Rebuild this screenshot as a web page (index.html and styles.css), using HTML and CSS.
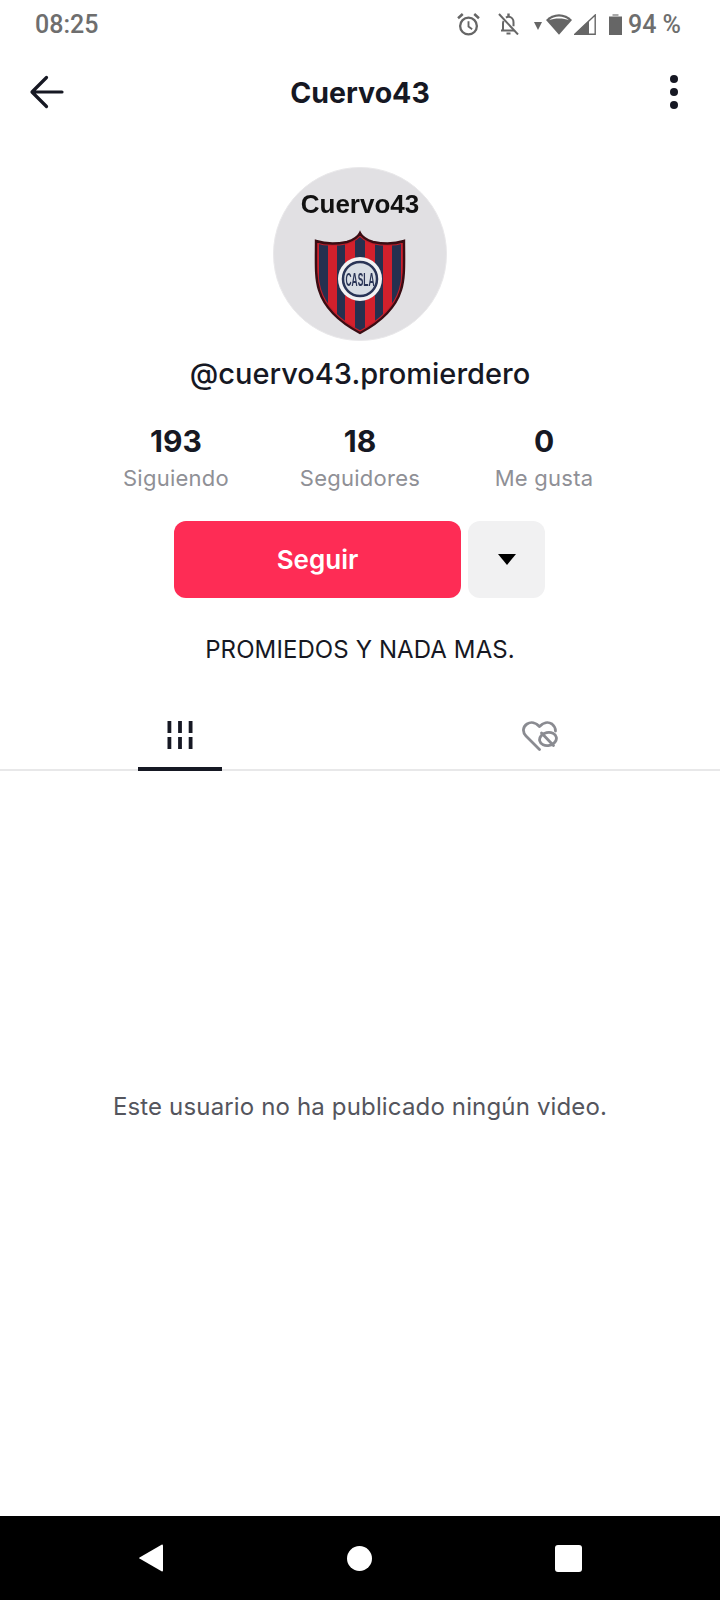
FILE: index.html
```html
<!DOCTYPE html>
<html lang="es">
<head>
  <meta charset="UTF-8">
  <title>Cuervo43</title>
  <link rel="stylesheet" href="styles.css">
</head>
<body>
  <div class="screen">

    <div class="status-bar">
      <span class="time">08:25</span>
      <div class="status-icons">
        <svg class="ic-alarm" width="23" height="23" viewBox="0 0 22 22" fill="none" stroke="#666" stroke-width="2.2">
          <circle cx="11" cy="12.500" r="8"/>
          <path d="M11 8v5l3.500 2.500" stroke-width="1.800"/>
          <path d="M1 5 5.500 1M21 5 16.500 1" stroke-width="2.400"/>
        </svg>
        <svg class="ic-bell" width="21" height="22" viewBox="0 0 21 22" fill="none" stroke="#666" stroke-width="2">
          <path d="M3 17.500h13M5 17v-6.500c0-1 .2-1.800.6-2.500M8 4.600c.7-.5 1.500-.8 2.500-.8 3 0 5 2.400 5 5.500v4"/>
          <path d="M10.500 .5v3" stroke-width="2.400"/>
          <path d="M8.500 20.500h4"/>
          <path d="M1 1 20 21.500"/>
        </svg>
        <svg class="ic-arrow" width="8" height="8" viewBox="0 0 8 8"><path d="M0 0h8L4 8z" fill="#666"/></svg>
        <svg class="ic-wifi" width="26" height="21" viewBox="0 0 26 21">
          <path d="M0 6C3.400 2.400 8 .3 13 .3S22.600 2.400 26 6L13 20.700z" fill="#666"/>
          <path d="M3.100 6.200C5.800 3.800 9.200 2.500 13 2.500s7.200 1.300 9.900 3.700C20.200 5.200 16.800 4.600 13 4.600s-7.200.6-9.900 1.600z" fill="#fff"/>
        </svg>
        <svg class="ic-signal" width="22" height="21" viewBox="0 0 22 21">
          <path d="M.8 20.300 21.200 1v19.300z" fill="#fff" stroke="#666" stroke-width="1.400"/>
          <path d="M0 21 15 6.800V21z" fill="#666"/>
        </svg>
        <svg class="ic-battery" width="13" height="21" viewBox="0 0 13 21">
          <path d="M3.500 0h6v2h-6z" fill="#aaa"/>
          <path d="M0 2.500h13V21H0z" fill="#666"/>
        </svg>
        <span class="battery-pct">94 %</span>
      </div>
    </div>

    <div class="top-nav">
      <svg width="36" height="36" viewBox="0 0 36 36" fill="none" stroke="#161823" stroke-width="3.200" stroke-linecap="round" stroke-linejoin="round">
        <path d="M33 18H3.500M17.500 3.500 3 18l14.500 14.500"/>
      </svg>
      <h1 class="nav-title">Cuervo43</h1>
      <div class="more-dots"><i></i><i></i><i></i></div>
    </div>

    <div class="profile">
      <div class="avatar">
        <span class="avatar-name">Cuervo43</span>
        <svg class="crest" width="90" height="102" viewBox="0 0 90 102">
          <defs>
            <path id="shield" d="M45 1C47 5 52 8 58 10 68 12 80 12 89 9 89 30 90 45 86 58 80 78 62 92 45 101 28 92 10 78 4 58 0 45 1 30 1 9 10 12 22 12 32 10 38 8 43 5 45 1z"/>
            <clipPath id="shield-clip"><use href="#shield"/></clipPath>
          </defs>
          <g clip-path="url(#shield-clip)">
            <rect width="90" height="102" fill="#d3202c"/>
            <rect x="4" width="9" height="102" fill="#26304f"/>
            <rect x="22" width="8" height="102" fill="#26304f"/>
            <rect x="40" width="10" height="102" fill="#26304f"/>
            <rect x="60" width="8" height="102" fill="#26304f"/>
            <rect x="77" width="9" height="102" fill="#26304f"/>
            <use href="#shield" fill="none" stroke="#c01f2b" stroke-width="4.500"/>
          </g>
          <use href="#shield" fill="none" stroke="#3a0d14" stroke-width="2.400"/>
          <circle cx="45" cy="47" r="22" fill="#f2f2f4"/>
          <circle cx="45" cy="47" r="17" fill="#d9dee5" stroke="#2a3557" stroke-width="2.500"/>
          <text class="crest-text" x="45" y="53.500" text-anchor="middle" textLength="29" lengthAdjust="spacingAndGlyphs">CASLA</text>
        </svg>
      </div>
      <div class="username">@cuervo43.promierdero</div>

      <div class="stats">
        <div class="stat"><strong>193</strong><span>Siguiendo</span></div>
        <div class="stat"><strong>18</strong><span>Seguidores</span></div>
        <div class="stat"><strong>0</strong><span>Me gusta</span></div>
      </div>

      <div class="actions">
        <button class="btn-follow" type="button">Seguir</button>
        <button class="btn-more" type="button"><i class="caret"></i></button>
      </div>

      <p class="bio">PROMIEDOS Y NADA MAS.</p>
    </div>

    <div class="tabs">
      <div class="tab active">
        <svg width="26" height="28" viewBox="0 0 26 28" fill="#161823">
          <rect x="0.500" y="0" width="3.800" height="12"/><rect x="11.100" y="0" width="3.800" height="12"/><rect x="21.700" y="0" width="3.800" height="12"/>
          <rect x="0.500" y="16" width="3.800" height="12"/><rect x="11.100" y="16" width="3.800" height="12"/><rect x="21.700" y="16" width="3.800" height="12"/>
        </svg>
      </div>
      <div class="tab">
        <svg width="36" height="30" viewBox="0 0 36 30" fill="none" stroke="#8a8b91" stroke-width="2.800" stroke-linecap="round" stroke-linejoin="round">
          <path d="M17.500 28.500 4 15C0 11 1 5.500 5 3c4-2.500 9-1.500 12.500 2.500C21 1.500 26 .5 30 3c2.500 2 3.500 4 3.500 7"/>
          <ellipse cx="26" cy="18" rx="8.500" ry="6.500" transform="rotate(-12 26 18)"/>
          <path d="M19.500 12 31.500 24.500"/>
        </svg>
      </div>
    </div>

    <div class="empty">
      <p>Este usuario no ha publicado ningún video.</p>
    </div>

    <div class="system-nav">
      <svg width="26" height="30" viewBox="0 0 26 30"><path d="M24 1.500 1.500 14.500a.6.6 0 0 0 0 1L24 28.500a1 1 0 0 0 1-1v-25a1 1 0 0 0-1-1z" fill="#fff"/></svg>
      <i class="nav-circle"></i>
      <i class="nav-square"></i>
    </div>

  </div>
</body>
</html>
```

FILE: styles.css
```css
* {
  box-sizing: border-box;
}

body {
  margin: 0;
  background-color: #fff;
  font-family: Inter, "Noto Sans", sans-serif;
  color: #161823;
}

.screen {
  width: 720px;
  height: 1600px;
  display: flex;
  flex-direction: column;
}

.status-bar {
  height: 48px;
  padding: 0 39px 0 35px;
  display: flex;
  justify-content: space-between;
  align-items: center;
  color: #6e6e6e;
}

.time {
  font-family: Roboto, sans-serif;
  font-size: 25px;
  font-weight: 500;
}

.status-icons {
  display: flex;
  align-items: center;
}

.ic-alarm { margin-right: 18px; }
.ic-bell { margin-right: 15px; }
.ic-arrow { margin-right: 4px; margin-top: 3px; }
.ic-wifi { margin-right: 2px; }
.ic-signal { margin-right: 13px; }
.ic-battery { margin-right: 6px; }

.battery-pct {
  font-family: Roboto, sans-serif;
  font-size: 25px;
  font-weight: 500;
}

.top-nav {
  height: 88px;
  margin-bottom: 2px;
  padding: 0 29px;
  display: grid;
  grid-template-columns: 1fr auto 1fr;
  align-items: center;
}

.nav-title {
  margin: 0;
  font-size: 28.500px;
  font-weight: 700;
}

.more-dots {
  justify-self: end;
  width: 8px;
  margin-right: 13px;
  display: flex;
  flex-direction: column;
  gap: 5px;
}

.more-dots i {
  width: 8px;
  height: 8px;
  border-radius: 50%;
  background-color: #161823;
}

.profile {
  display: flex;
  flex-direction: column;
  align-items: center;
}

.avatar {
  margin-top: 29px;
  width: 174px;
  height: 174px;
  border-radius: 50%;
  background-color: #e1e0e3;
  border: 1px solid #e9e8ea;
  display: flex;
  flex-direction: column;
  align-items: center;
}

.avatar-name {
  margin-top: 22px;
  font-family: "Liberation Sans", Arial, sans-serif;
  font-size: 26px;
  line-height: 28px;
  font-weight: 700;
  color: #111;
  filter: blur(0.4px);
}

.crest {
  margin-top: 14px;
  overflow: visible;
  filter: blur(0.4px);
}

.crest-text {
  font-family: "Liberation Sans", Arial, sans-serif;
  font-size: 19px;
  font-weight: 700;
  fill: #2a3557;
}

.username {
  margin-top: 14px;
  font-size: 29px;
  line-height: 38px;
  font-weight: 500;
}

.stats {
  margin-top: 30px;
  width: 552px;
  display: grid;
  grid-template-columns: repeat(3, 1fr);
}

.stat {
  display: flex;
  flex-direction: column;
  align-items: center;
}

.stat strong {
  font-size: 30px;
  line-height: 37px;
  font-weight: 700;
}

.stat span {
  font-size: 22px;
  line-height: 36px;
  letter-spacing: 0.25px;
  color: #8f9096;
}

.actions {
  margin-top: 25px;
  margin-right: 1px;
  display: flex;
  gap: 7px;
}

button {
  border: 0;
  padding: 0;
  height: 77px;
  border-radius: 12px;
  font-family: inherit;
}

.btn-follow {
  width: 287px;
  background-color: #fe2c55;
  color: #fff;
  font-size: 26px;
  font-weight: 600;
}

.btn-more {
  width: 77px;
  background-color: #f1f1f2;
  display: flex;
  justify-content: center;
  align-items: center;
}

.caret {
  width: 0;
  height: 0;
  border-left: 9px solid transparent;
  border-right: 9px solid transparent;
  border-top: 11px solid #000;
}

.bio {
  margin: 36px 0 0;
  font-size: 24px;
  line-height: 32px;
  letter-spacing: 0.1px;
}

.tabs {
  margin-top: 47px;
  height: 58px;
  border-bottom: 2px solid #e8e8e9;
  display: flex;
  justify-content: space-between;
  padding-left: 138px;
  padding-right: 138px;
}

.tab {
  width: 84px;
  padding-top: 8px;
  display: flex;
  justify-content: center;
  align-items: flex-start;
}

.tab.active {
  height: 58px;
  border-bottom: 4px solid #161823;
}

.empty {
  flex: 1;
  padding-top: 319px;
  text-align: center;
}

.empty p {
  margin: 0;
  font-size: 24px;
  line-height: 34px;
  letter-spacing: 0.15px;
  color: #54555d;
}

.system-nav {
  height: 84px;
  background-color: #000;
  padding: 0 138px;
  display: flex;
  justify-content: space-between;
  align-items: center;
}

.nav-circle {
  width: 25px;
  height: 25px;
  border-radius: 50%;
  background-color: #fff;
}

.nav-square {
  width: 27px;
  height: 27px;
  border-radius: 3px;
  background-color: #fff;
}
```
